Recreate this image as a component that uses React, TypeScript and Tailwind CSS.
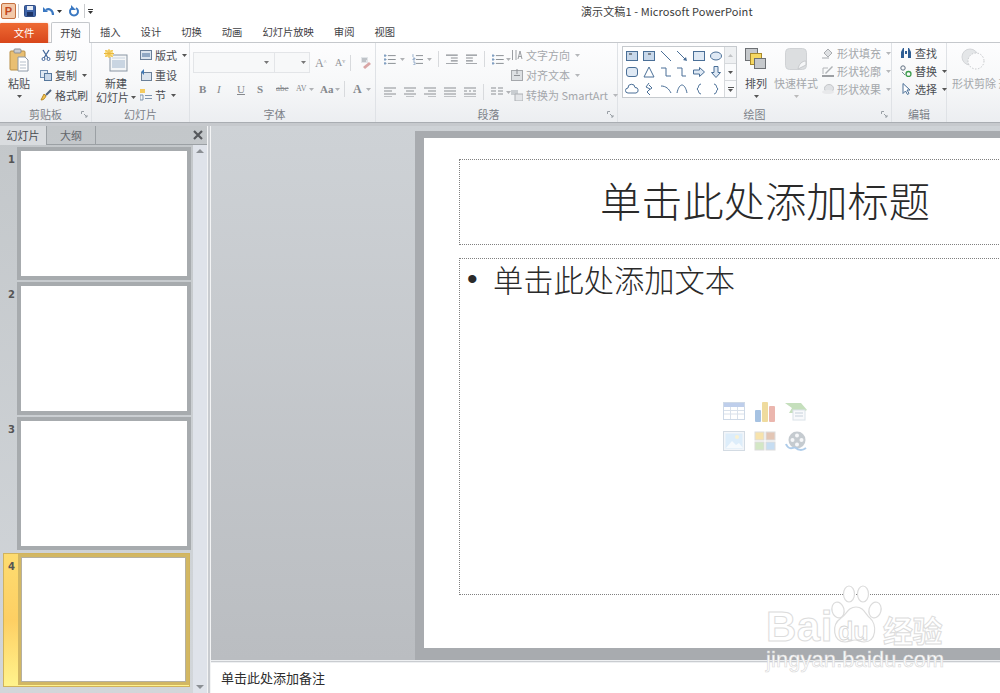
import React from 'react';

const Caret = ({ className = '' }: { className?: string }) => (
  <svg width="5" height="3" viewBox="0 0 5 3" className={className}><path d="M0 0h5L2.5 3z" fill="currentColor" /></svg>
);

const DialogMark = () => (
  <svg width="7" height="7" viewBox="0 0 7 7" className="absolute right-[3px] bottom-[4px]" fill="none" stroke="#9aa0a6">
    <path d="M.5 3V.5H3" /><path d="M3 3l3 3M6 4v2H4" />
  </svg>
);

const Group = ({ label, width, children, dialog, labelClass = '' }: { label: string; width: string; children: React.ReactNode; dialog?: boolean; labelClass?: string }) => (
  <div className={`relative flex shrink-0 flex-col border-r border-[#dfe2e6] ${width}`}>
    <div className="flex h-[64px] min-h-0">{children}</div>
    <div className={`flex h-[16px] items-center justify-center text-[11px] text-[#7b8087] ${labelClass}`}>{label}</div>
    {dialog && <DialogMark />}
  </div>
);

const SmallItem = ({ icon, label, caret, muted, h = 'h-[20px]' }: { icon: React.ReactNode; label: string; caret?: boolean; muted?: boolean; h?: string }) => (
  <div className={`flex items-center gap-[3px] whitespace-nowrap text-[11px] ${h} ${muted ? 'text-[#a4a7ab]' : 'text-[#4a4d52]'}`}>
    <span className="flex h-[12px] w-[12px] shrink-0 items-center justify-center">{icon}</span>
    <span>{label}</span>
    {caret && <Caret className={`ml-[2px] ${muted ? 'text-[#b5b7ba]' : 'text-[#555]'}`} />}
  </div>
);

const Ico = ({ children, w = 12, h = 12, vb }: { children: React.ReactNode; w?: number; h?: number; vb?: string }) => (
  <svg width={w} height={h} viewBox={vb ?? `0 0 ${w} ${h}`} fill="none">{children}</svg>
);

const PasteIcon = () => (
  <Ico w={20} h={24}>
    <rect x="1" y="3" width="15" height="19" rx="1" fill="#e9bf72" stroke="#b98f45" />
    <rect x="5" y="1" width="7" height="4" rx="1" fill="#c9ccd0" stroke="#8c8f94" />
    <path d="M9 9h7l3 3v11H9z" fill="#fff" stroke="#8d99a8" />
    <path d="M11 14h6M11 17h6M11 20h6" stroke="#b5bfca" />
  </Ico>
);

const NewSlideIcon = () => (
  <Ico w={24} h={24}>
    <rect x="6" y="6" width="17" height="16" fill="#f4f6f8" stroke="#8a96a3" />
    <rect x="8" y="11" width="13" height="8" fill="#c9d5e2" />
    <rect x="8" y="8" width="13" height="2" fill="#dfe5ec" />
    <path d="M1 1h8v7H1z" fill="#fbe08a" />
    <path d="M5 0v9M0 4.500h10M1.500 1l7 7M8.500 1l-7 7" stroke="#eab93f" strokeWidth="1" />
  </Ico>
);

const Row = ({ children, className = '' }: { children: React.ReactNode; className?: string }) => (
  <div className={`flex items-center ${className}`}>{children}</div>
);

const ListIcon = ({ number }: { number?: boolean }) => (
  <Ico w={12} h={11}>
    <path d="M4 1.500h8M4 5.500h8M4 9.500h8" stroke="#8a8f95" />
    <path d={number ? 'M1 0v3M1 4h2v1H1v1h2M1 8h2v3H1' : 'M0 1h2v1H0zM0 5h2v1H0zM0 9h2v1H0z'} stroke="#6f90b8" strokeWidth={number ? 0.7 : 1} />
  </Ico>
);

const AlignIcon = ({ d }: { d: string }) => (
  <Ico w={12} h={10}><path d={d} stroke="#8b8f94" strokeWidth="1.200" /></Ico>
);

const shapes: React.ReactNode[] = [
  <><rect x="1.500" y="2.500" width="11" height="9" fill="#c8d8ea" stroke="#4a6f97" /><path d="M4 5h3" stroke="#333" /></>,
  <><rect x="1.500" y="2.500" width="11" height="9" fill="#c8d8ea" stroke="#4a6f97" /><path d="M6 5h3" stroke="#333" /></>,
  <path d="M2 2l10 10" stroke="#4a6f97" />,
  <><path d="M2 2l9 9" stroke="#4a6f97" /><path d="M12 12l-4-1 3-3z" fill="#4a6f97" /></>,
  <rect x="1.500" y="2.500" width="11" height="9" fill="#dfe9f4" stroke="#4a6f97" />,
  <ellipse cx="7" cy="7" rx="5.500" ry="4" fill="#dfe9f4" stroke="#4a6f97" />,
  <rect x="1.500" y="2.500" width="11" height="9" rx="2.500" fill="#dfe9f4" stroke="#4a6f97" />,
  <path d="M7 2l5 10H2z" fill="#fff" stroke="#4a6f97" />,
  <path d="M2 3h5v8h5" stroke="#4a6f97" />,
  <path d="M2 3h5v8h4" stroke="#4a6f97" />,
  <path d="M1.500 5h6V2.500L12.500 7l-5 4.500V9h-6z" fill="#dfe9f4" stroke="#4a6f97" />,
  <path d="M5 1.500h4v6h2.500L7 12.500 2.500 7.500H5z" fill="#dfe9f4" stroke="#4a6f97" />,
  <path d="M3 11a2.500 2.500 0 0 1 0-5 3.500 3.500 0 0 1 7-.5 2.800 2.800 0 0 1 1 5.500z" fill="#fff" stroke="#4a6f97" />,
  <path d="M7 1L4 5l4 2-3 3 3 3M7 3l3 3-3 2" stroke="#4a6f97" />,
  <path d="M2 4c5 0 8 3 10 7" stroke="#4a6f97" />,
  <path d="M2 11c1-5 3-8 5-8s4 3 5 8" stroke="#4a6f97" />,
  <path d="M9 2C6 2 7 6 5 7c2 1 1 5 4 5" stroke="#4a6f97" />,
  <path d="M5 2c3 0 2 4 4 5-2 1-1 5-4 5" stroke="#4a6f97" />,
];

const Ribbon = () => (
  <div className="flex h-[80px] overflow-hidden border-b border-[#a9adb2] bg-gradient-to-b from-[#fdfdfe] via-[#f7f8f9] to-[#eceef1]">
    <Group label="剪贴板" width="w-[92px]" dialog>
      <div className="flex w-[38px] flex-col items-center pt-[5px] text-[11px] text-[#4a4d52]">
        <PasteIcon />
        <span className="mt-[4px] leading-[14px]">粘贴</span>
        <Caret className="mt-[5px] text-[#555]" />
      </div>
      <div className="ml-[2px] flex flex-col pt-[2px]">
        <SmallItem label="剪切" icon={<Ico w={10} h={12}><path d="M2 1l5 8M8 1L3 9" stroke="#44679a" strokeWidth="1.300" /><circle cx="2.500" cy="10" r="1.500" stroke="#44679a" /><circle cx="7.500" cy="10" r="1.500" stroke="#44679a" /></Ico>} />
        <SmallItem label="复制" caret icon={<Ico><rect x="0.500" y="1.500" width="7" height="7" fill="#dfe8f2" stroke="#6f8db0" /><rect x="4.500" y="4.500" width="7" height="7" fill="#c6d6e8" stroke="#55779c" /></Ico>} />
        <SmallItem label="格式刷" icon={<Ico><path d="M1 11c3 0 4-2 5-4L4 5C3 7 2 9 1 11z" fill="#f1c34f" stroke="#b98a2a" /><path d="M6 6l5-5" stroke="#50647e" strokeWidth="2" /></Ico>} />
      </div>
    </Group>

    <Group label="幻灯片" width="w-[98px]">
      <div className="ml-[1px] flex w-[46px] flex-col items-center pt-[6px] text-[11px] leading-[13.500px] text-[#4a4d52]">
        <NewSlideIcon />
        <span className="mt-[4px]">新建</span>
        <span className="flex items-center gap-[2px] whitespace-nowrap">幻灯片<Caret className="text-[#555]" /></span>
      </div>
      <div className="ml-[1px] flex flex-col pt-[2px]">
        <SmallItem label="版式" caret icon={<Ico w={12} h={10}><rect x="0.500" y="0.500" width="11" height="9" fill="#dbe4ee" stroke="#6a7f98" /><rect x="2" y="3" width="8" height="4" fill="#90a8c4" /></Ico>} />
        <SmallItem label="重设" icon={<Ico w={12} h={12}><rect x="1.500" y="3.500" width="10" height="8" fill="#dbe4ee" stroke="#6a7f98" /><path d="M1 3l3-3v6z" fill="#3f78b5" /></Ico>} />
        <SmallItem label="节" caret icon={<Ico w={12} h={12}><path d="M0 0h5v4H0z" fill="#f4cb5f" /><path d="M5 6.500h7M5 9.500h7M0 6h3v5H0z" stroke="#7f95ae" /></Ico>} />
      </div>
    </Group>

    <Group label="字体" width="w-[186px]" labelClass="pr-[16px]">
      <div className="flex flex-col pl-[3px] pt-[9px]">
        <Row className="h-[21px] text-[#8a8d91]">
          <div className="flex h-[21px] w-[82px] items-center justify-end border border-[#e3e5e8] bg-[#f7f8f9] pr-[5px]"><Caret className="text-[#777]" /></div>
          <div className="flex h-[21px] w-[35px] items-center justify-end border border-l-0 border-[#e3e5e8] bg-[#f7f8f9] pr-[3px]"><Caret className="text-[#777]" /></div>
          <span className="ml-[5px] w-[20px] font-['Liberation_Serif',serif] text-[12px] text-[#8f9296]">A<sup className="text-[6px]">^</sup></span>
          <span className="w-[15px] font-['Liberation_Serif',serif] text-[10px] text-[#8f9296]">A<sup className="text-[6px]">v</sup></span>
          <span className="h-[16px] w-px bg-[#d8dadd]" />
          <span className="ml-[8px]"><Ico w={13} h={13}><path d="M2 1h7v6H2z" fill="#e2e5e9" /><path d="M3 3h5M3 5h4" stroke="#9ba0a6" /><path d="M4 11l6-5 2 2-6 5z" fill="#d9a6a6" /></Ico></span>
        </Row>
        <Row className="mt-[7px] h-[18px] pl-[6px] font-['Liberation_Serif',serif] text-[#85888c]">
          <span className="w-[18px] text-[11px] font-bold">B</span>
          <span className="w-[20px] text-[11px] italic">I</span>
          <span className="w-[20px] text-[11px] underline">U</span>
          <span className="w-[19px] text-[11px] font-bold">S</span>
          <span className="w-[20px] text-[9px] line-through">abe</span>
          <span className="flex w-[24px] items-center gap-[2px] text-[8px]">AV<Caret className="text-[#b0b2b5]" /></span>
          <span className="flex w-[24px] items-center gap-[2px] text-[11px] font-bold">Aa<Caret className="text-[#b0b2b5]" /></span>
          <span className="mr-[8px] h-[16px] w-px bg-[#d8dadd]" />
          <span className="flex items-center gap-[4px] text-[12px] font-bold">A<Caret className="text-[#b0b2b5]" /></span>
        </Row>
      </div>
    </Group>

    <Group label="段落" width="w-[242px]" labelClass="pr-[16px]" dialog>
      <div className="flex w-[135px] flex-col pl-[8px] pt-[6px] text-[#b0b2b5]">
        <Row className="h-[20px]">
          <ListIcon /><Caret className="ml-[4px] mr-[7px]" />
          <ListIcon number /><Caret className="ml-[4px] mr-[6px]" />
          <span className="mr-[7px] h-[16px] w-px bg-[#d8dadd]" />
          <AlignIcon d="M0 1h12M5 4h7M5 7h7M0 10h12" /><span className="w-[8px]" />
          <AlignIcon d="M0 1h12M0 4h7M0 7h7M0 10h12" />
          <span className="mx-[7px] h-[16px] w-px bg-[#d8dadd]" />
          <ListIcon /><Caret className="ml-[2px]" />
        </Row>
        <Row className="mt-[13px] h-[20px]">
          <AlignIcon d="M0 1h12M0 4h8M0 7h12M0 10h8" /><span className="w-[8px]" />
          <AlignIcon d="M0 1h12M2 4h8M0 7h12M2 10h8" /><span className="w-[8px]" />
          <AlignIcon d="M0 1h12M4 4h8M0 7h12M4 10h8" /><span className="w-[8px]" />
          <AlignIcon d="M0 1h12M0 4h12M0 7h12M0 10h12" /><span className="w-[8px]" />
          <AlignIcon d="M0 1h12M0 4h3M5 4h2M9 4h3M0 7h12M0 10h12" />
          <span className="mx-[7px] h-[16px] w-px bg-[#d8dadd]" />
          <AlignIcon d="M0 1h5M7 1h5M0 4h5M7 4h5M0 7h5M7 7h5" /><Caret className="ml-[3px]" />
        </Row>
      </div>
      <div className="flex flex-col pt-[2px]">
        <SmallItem muted label="文字方向" caret icon={<Ico><path d="M1.500 1v10M5 1v10M9 2l-2 8M9 2l2 8M7.500 7.500h3" stroke="#9b9ea2" /></Ico>} />
        <SmallItem muted label="对齐文本" caret icon={<Ico><rect x="0.500" y="1.500" width="11" height="10" fill="#dde0e3" stroke="#a5a8ac" /><path d="M6 0v5M3 6.500h6" stroke="#8d9095" /></Ico>} />
        <SmallItem muted label="转换为 SmartArt" caret icon={<Ico><path d="M0 1h7v5H0z" fill="#c9cdd1" /><path d="M4 5h8v7H4z" fill="#e3e5e8" stroke="#adb0b4" /></Ico>} />
      </div>
    </Group>

    <Group label="绘图" width="w-[274px]" dialog>
      <div className="ml-[4px] mt-[3px] flex h-[52px] w-[115px] border border-[#c6cace] bg-white">
        <div className="grid w-[102px] grid-cols-6 content-center pl-[1px]">
          {shapes.map((s, i) => (
            <div key={i} className="flex h-[16.500px] items-center justify-center">
              <svg width="14" height="14" viewBox="0 0 14 14" fill="none">{s}</svg>
            </div>
          ))}
        </div>
        <div className="flex w-[12px] flex-col border-l border-[#d6d9dc] bg-[#eef0f2] text-[#555]">
          <div className="flex h-[17px] items-center justify-center border-b border-[#d6d9dc]"><Caret className="rotate-180 text-[#c0c2c5]" /></div>
          <div className="flex h-[17px] items-center justify-center border-b border-[#d6d9dc] bg-[#fafbfc]"><Caret /></div>
          <div className="flex flex-1 flex-col items-center justify-center gap-[1px] bg-[#fafbfc]"><span className="h-px w-[6px] bg-[#555]" /><Caret /></div>
        </div>
      </div>
      <div className="ml-[7px] flex w-[24px] flex-col items-center pt-[5px] text-[11px] text-[#4a4d52]">
        <Ico w={22} h={22}>
          <rect x="0.500" y="0.500" width="12" height="12" fill="#c6c9cc" stroke="#6d7074" />
          <rect x="5.500" y="5.500" width="11" height="11" fill="#f6d862" stroke="#a98a2c" />
          <rect x="9.500" y="10.500" width="11" height="10" fill="#c6c9cc" stroke="#6d7074" />
        </Ico>
        <span className="mt-[6px] whitespace-nowrap leading-[14px]">排列</span>
        <Caret className="mt-[5px] text-[#555]" />
      </div>
      <div className="ml-[6px] flex w-[44px] flex-col items-center pt-[5px] text-[11px] text-[#a4a7ab]">
        <Ico w={22} h={22}>
          <rect x="0.500" y="0.500" width="21" height="21" rx="4" fill="#dcdee0" stroke="#d0d2d5" />
          <path d="M21 13c-4 0-7 3-8 8l8-4z" fill="#f6f7f8" stroke="#c7c9cc" />
        </Ico>
        <span className="mt-[6px] whitespace-nowrap leading-[14px]">快速样式</span>
        <Caret className="mt-[5px] text-[#bbb]" />
      </div>
      <div className="ml-[4px] flex flex-col pt-[1px]">
        <SmallItem muted h="h-[18px]" label="形状填充" caret icon={<Ico><path d="M2 6l4-4 4 4-4 4z" fill="#dfe1e4" stroke="#a9acb0" /><path d="M0 11h7" stroke="#d0d2d5" strokeWidth="2" /></Ico>} />
        <SmallItem muted h="h-[18px]" label="形状轮廓" caret icon={<Ico><path d="M3 8l7-7 1 1-7 7z" fill="#aeb1b5" /><path d="M0 11h12" stroke="#9c9fa3" strokeWidth="2" /><path d="M1 9V3h5" stroke="#b4b7ba" /></Ico>} />
        <SmallItem muted h="h-[18px]" label="形状效果" caret icon={<Ico><ellipse cx="7" cy="5.500" rx="4.500" ry="4" fill="#dfe1e4" stroke="#c3c5c8" /><ellipse cx="6" cy="9" rx="6" ry="2" fill="#e8e9eb" /></Ico>} />
      </div>
    </Group>

    <Group label="编辑" width="w-[55px]">
      <div className="ml-[8px] flex flex-col pt-[1px]">
        <SmallItem h="h-[18px]" label="查找" icon={<Ico><path d="M1 11V5l2-4h1v10zM11 11V5L9 1H8v10zM5 4h2v3H5z" fill="#2f5e94" /></Ico>} />
        <SmallItem h="h-[18px]" label="替换" caret icon={<Ico><circle cx="3" cy="3" r="2.200" stroke="#5f6f80" /><path d="M2 7l3 3" stroke="#7c8c9c" /><circle cx="8.500" cy="9" r="2.500" stroke="#3b9b4a" strokeWidth="1.300" /></Ico>} />
        <SmallItem h="h-[18px]" label="选择" caret icon={<Ico><path d="M3 0.500v10l2.500-2.500 2 3.500 1.500-1-2-3.500H10z" fill="#fff" stroke="#4a6f97" /></Ico>} />
      </div>
    </Group>

    <div className="flex h-[63px] flex-1 flex-col overflow-hidden pl-[5px] pt-[5px] text-[11px] text-[#a4a7ab]">
      <div className="ml-[9px] h-[22px]">
        <Ico w={24} h={22}>
          <circle cx="9" cy="9" r="8" fill="#e4e6e8" stroke="#d4d6d9" />
          <circle cx="15" cy="13" r="8" fill="#fbfbfc" stroke="#c5c7ca" strokeDasharray="1.500 1.500" />
        </Ico>
      </div>
      <span className="mt-[6px] whitespace-nowrap leading-[14px]">形状剪除 形</span>
    </div>
  </div>
);

const tabs = ['插入', '设计', '切换', '动画', '幻灯片放映', '审阅', '视图'];

const TopBar = () => (
  <>
    <div className="flex h-[22px] items-center bg-white">
      <div className="ml-px flex h-[16px] w-[15px] items-center justify-center rounded-[2px] border border-[#c5703f] bg-[#f3c9a9] font-['Liberation_Sans',sans-serif] text-[11px] font-bold leading-none text-[#c2461c]">P</div>
      <span className="ml-[2px] h-[14px] w-px bg-[#c9cbce]" />
      <span className="ml-[5px]">
        <Ico w={12} h={12}><rect x="0.500" y="0.500" width="11" height="11" rx="1" fill="#3f64a8" stroke="#2f4d85" /><rect x="3" y="1" width="6" height="4" fill="#e8edf5" /><rect x="3" y="7" width="6" height="4" fill="#1f3566" /></Ico>
      </span>
      <span className="ml-[6px]">
        <Ico w={13} h={12}><path d="M11 10c0-5-4-7-7-5" stroke="#3a78c2" strokeWidth="2.200" /><path d="M1 2v5h5z" fill="#3a78c2" /></Ico>
      </span>
      <Caret className="ml-[2px] text-[#333]" />
      <span className="ml-[6px]">
        <Ico w={12} h={12}><path d="M8 3a4 4 0 1 1-4 0" stroke="#3a78c2" strokeWidth="2" /><path d="M3 0v5h5z" fill="#3a78c2" /></Ico>
      </span>
      <span className="ml-[4px] h-[14px] w-px bg-[#c9cbce]" />
      <span className="ml-[3px] flex flex-col items-center gap-px"><span className="h-px w-[5px] bg-[#333]" /><Caret className="text-[#333]" /></span>
      <div className="ml-[488px] whitespace-nowrap text-[11px] tracking-[0.1px] text-[#3b3b3b]">演示文稿1 - Microsoft PowerPoint</div>
    </div>
    <div className="flex h-[21px] items-end border-b border-[#c5c8cc] bg-white text-[10.300px] text-[#3f4145]">
      <div className="mb-[-1px] flex h-[20px] w-[48px] items-center justify-center rounded-t-[1px] bg-gradient-to-b from-[#ee6a33] to-[#d8461b] text-white shadow-[0_1px_3px_#e98a66]">文件</div>
      <div className="relative z-10 mb-[-1px] ml-[3px] flex h-[21px] w-[39px] items-center justify-center rounded-t-[2px] border border-b-0 border-[#c5c8cc] bg-[#fdfdfe]">开始</div>
      {tabs.map(t => (
        <div key={t} className="flex h-[20px] items-center whitespace-nowrap px-[10px]">{t}</div>
      ))}
    </div>
  </>
);

const Thumb = ({ n, active }: { n: number; active?: boolean }) => (
  <div className={`flex shrink-0 ${active ? 'ml-[3px] mt-px h-[134px] w-[187px] border border-[#d1b35c] bg-gradient-to-b from-[#fddc70] via-[#fdcf63] to-[#fff38c]' : 'h-[135px]'}`}>
    <div className={`shrink-0 pt-[5px] font-['DejaVu_Sans',sans-serif] text-[10px] font-bold text-[#555] ${active ? 'w-[14px] pl-[4px]' : 'w-[17px] pl-[8px]'}`}>{n}</div>
    <div className={`bg-white ${active ? 'h-[131px] w-[172px] border-[3px] border-[#d2b763] outline outline-1 -outline-offset-4 outline-[#b5b0a0]' : 'h-[133px] w-[174px] border-[4px] border-[#a7abae]'}`} />
  </div>
);

const LeftPane = () => (
  <div className="flex w-[207px] shrink-0 flex-col bg-gradient-to-b from-[#c3c7ca] to-[#d2d6da]">
    <div className="flex h-[19px] shrink-0 items-stretch border-b border-[#9ba0a4] text-[11px]">
      <div className="mb-[-1px] flex w-[47px] items-center justify-center border-r border-[#9ba0a4] bg-[#d9dcdf] text-[#4a4d52]">幻灯片</div>
      <div className="flex w-[49px] items-center justify-center border-r border-[#9ba0a4] text-[#63666b]">大纲</div>
      <div className="flex flex-1 items-center justify-end pr-[4px]">
        <svg width="10" height="10" viewBox="0 0 10 10"><path d="M1 1l8 8M9 1L1 9" stroke="#55585c" strokeWidth="2.200" /></svg>
      </div>
    </div>
    <div className="flex min-h-0 flex-1">
      <div className="flex w-[193px] flex-col overflow-hidden pt-[2px]">
        {[1, 2, 3].map(n => <Thumb key={n} n={n} />)}
        <Thumb n={4} active />
      </div>
      <div className="flex w-[14px] flex-col items-center justify-between bg-[#dfe3ea] py-[4px] text-[#8b8f94]">
        <svg width="8" height="4" viewBox="0 0 8 4"><path d="M4 0l4 4H0z" fill="currentColor" /></svg>
        <svg width="8" height="4" viewBox="0 0 8 4"><path d="M0 0h8L4 4z" fill="currentColor" /></svg>
      </div>
    </div>
  </div>
);

const PlaceholderIcons = () => (
  <div className="absolute inset-0 flex items-center justify-center opacity-50">
    <div className="grid grid-cols-3 gap-x-[9px] gap-y-[8px]">
      <Ico w={22} h={20}><rect x="0.500" y="1.500" width="21" height="17" fill="#fff" stroke="#9fb4d0" /><rect x="1" y="2" width="20" height="4" fill="#7f9fd8" /><path d="M1 9.500h20M1 13h20M7.500 6v12M14.500 6v12" stroke="#b5c4d8" /></Ico>
      <Ico w={22} h={22}><rect x="1" y="9" width="6" height="12" rx="1" fill="#4f86c6" /><rect x="8" y="1" width="6" height="20" rx="1" fill="#e0b93f" /><rect x="15" y="5" width="6" height="16" rx="1" fill="#d9705f" /></Ico>
      <Ico w={22} h={20}><path d="M0 2h16l6 7-6 3H4l3-5z" fill="#8cc07c" /><rect x="8" y="9" width="12" height="10" fill="#f2f5f8" stroke="#b8c6d4" /><path d="M10 12h8M10 15h8" stroke="#8fa3b8" /></Ico>
      <Ico w={22} h={20}><rect x="0.500" y="0.500" width="21" height="19" fill="#e6edf4" stroke="#a8b8c8" /><rect x="2.500" y="2.500" width="17" height="15" fill="#bcdcf6" /><path d="M3 17l6-7 4 4 3-2 4 5z" fill="#eef6fd" /><circle cx="14" cy="6" r="2" fill="#f6e6a8" /></Ico>
      <Ico w={22} h={20}><rect x="1" y="1" width="9" height="8" fill="#f1c85c" stroke="#bbb" /><rect x="12" y="1" width="9" height="8" fill="#c98f6e" stroke="#bbb" /><rect x="1" y="11" width="9" height="8" fill="#a8d08d" stroke="#bbb" /><rect x="12" y="11" width="9" height="8" fill="#8fbce6" stroke="#bbb" /></Ico>
      <Ico w={22} h={22}><circle cx="12" cy="9" r="8.500" fill="#8d98a3" /><circle cx="12" cy="4.500" r="2" fill="#eef1f4" /><circle cx="7.500" cy="9" r="2" fill="#eef1f4" /><circle cx="16.500" cy="9" r="2" fill="#eef1f4" /><circle cx="12" cy="13.500" r="2" fill="#eef1f4" /><path d="M1 13c3 8 8 2 10 4s6 3 10 0" stroke="#5f9ad6" strokeWidth="2" /></Ico>
    </div>
  </div>
);

const Slide = () => (
  <div className="flex flex-1 overflow-hidden bg-gradient-to-b from-[#ced2d6] to-[#babdc1] pl-[204px] pt-[5px]">
    <div className="h-[529px] w-[700px] shrink-0 bg-[#a8abaf] pl-[9px] pt-[7px]">
      <div className="h-[510px] w-[691px] bg-white pl-[35px] pt-[21px]">
        <div className="flex h-[86px] w-[612px] items-center justify-center border border-dotted border-[#808080] pb-[4px] text-[41.250px] font-light leading-none text-[#2a2a2a]">单击此处添加标题</div>
        <div className="relative mt-[13px] flex h-[337px] w-[612px] border border-dotted border-[#808080] pl-[7px] pt-px text-[30.250px] font-light leading-[38px] text-[#2a2a2a]">
          <span className="w-[26px] font-['Liberation_Sans',sans-serif]">•</span>
          <span>单击此处添加文本</span>
          <PlaceholderIcons />
        </div>
      </div>
    </div>
  </div>
);

const Watermark = () => (
  <div className="pointer-events-none absolute left-[766px] top-[585px] h-[90px] w-[185px] font-['Liberation_Sans',sans-serif] text-white">
    <span className="absolute left-0 top-[19px] text-[42px] font-bold leading-[46px] tracking-[0.5px] [-webkit-text-stroke:1px_#dcdcdc]">Bai</span>
    <svg width="56" height="60" viewBox="0 0 56 60" className="absolute left-[63px] top-0" fill="#fff" stroke="#dcdcdc" strokeWidth="1.200">
      <ellipse cx="9" cy="25" rx="6" ry="8" transform="rotate(-15 9 25)" />
      <ellipse cx="20" cy="9" rx="5.500" ry="8" />
      <ellipse cx="34" cy="9" rx="5.500" ry="8" />
      <ellipse cx="46" cy="25" rx="6" ry="8" transform="rotate(15 46 25)" />
      <path d="M27 22c8 0 9 7 14 11 7 6 7 24-6 24-4 0-6-2-9-2s-6 2-10 2C4 57 2 40 12 33c6-4 7-11 15-11z" />
    </svg>
    <span className="absolute left-[72px] top-[34px] text-[25px] font-bold leading-[24px] text-white [-webkit-text-stroke:0.8px_#d5d5d5]">du</span>
    <span className="absolute left-[117px] top-[29px] font-['Noto_Sans_CJK_SC',sans-serif] text-[30px] font-bold leading-[30px] tracking-[-0.500px] [-webkit-text-stroke:1px_#dcdcdc]">经验</span>
    <span className="absolute left-0 top-[62px] whitespace-nowrap text-[21.700px] leading-[26px] tracking-[0.200px] [-webkit-text-stroke:0.6px_#d8d8d8]">jingyan.baidu.com</span>
  </div>
);

export default function App() {
  return (
    <div className="relative flex h-[693px] w-[1000px] flex-col overflow-hidden bg-white font-['Noto_Sans_CJK_SC',sans-serif]">
      <TopBar />
      <Ribbon />
      <div className="h-[3px] shrink-0 bg-[#c6c9cd]" />
      <div className="flex min-h-0 flex-1">
        <LeftPane />
        <div className="w-[4px] shrink-0 border-x border-[#f3f4f5] bg-[#c9ccd0]" />
        <div className="flex min-w-0 flex-1 flex-col">
          <Slide />
          <div className="h-[3px] shrink-0 border-y border-[#eef0f2] bg-[#c9ccd0]" />
          <div className="flex h-[30px] shrink-0 items-center bg-white pl-[10px] text-[13px] text-[#2d2d2d]">单击此处添加备注</div>
        </div>
      </div>
      <Watermark />
    </div>
  );
}
